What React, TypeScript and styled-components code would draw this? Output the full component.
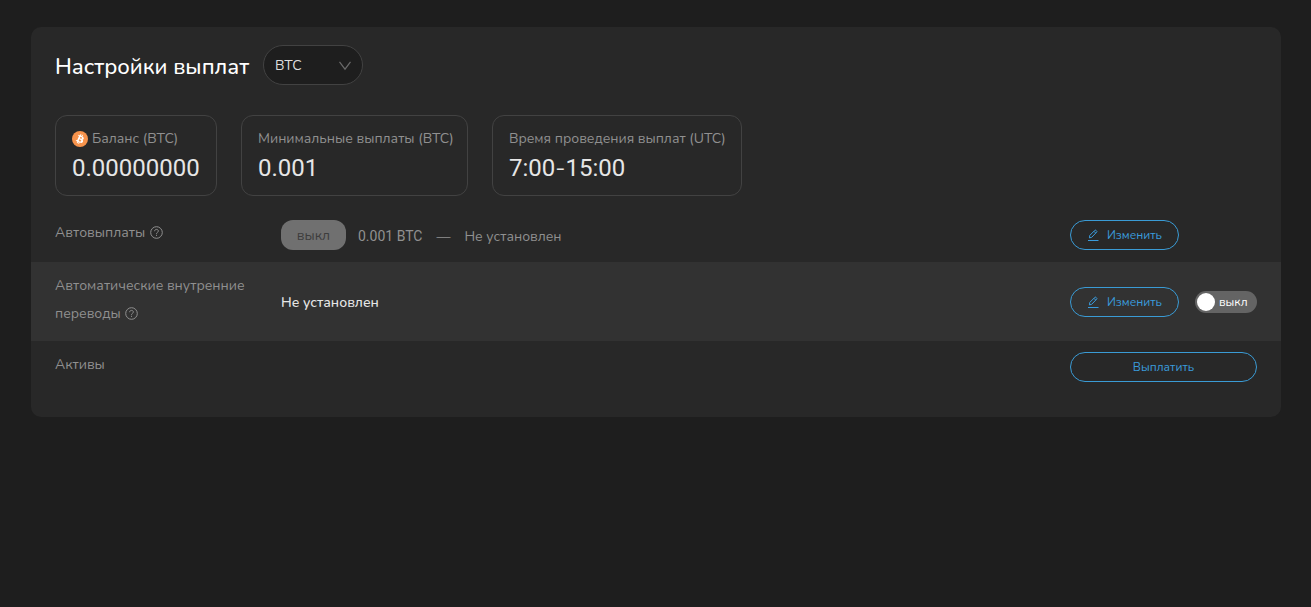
import React, { useState } from 'react';
import styled, { createGlobalStyle } from 'styled-components';

const sans = `'Nunito', 'Noto Sans', 'Open Sans', sans-serif`;
const digits = `'Roboto', 'Noto Sans', sans-serif`;

const GlobalStyle = createGlobalStyle`
  *, *::before, *::after { box-sizing: border-box; }
  body {
    margin: 0;
    background: #1e1e1e;
    color: #ffffff;
    font-family: ${sans};
    font-size: 14px;
  }
  h1, p, dl, dd { margin: 0; }
  button, select { font-family: inherit; }
`;

const Page = styled.main`
  padding: 27px 30px 24px 31px;
`;

const Panel = styled.section`
  padding: 18px 0 23px;
  border-radius: 10px;
  background: #282828;
`;

const Header = styled.header`
  display: flex;
  align-items: center;
  gap: 13px;
  height: 40px;
  padding: 0 24px;
`;

const Title = styled.h1`
  padding-top: 4px;
  font-size: 22px;
  line-height: 40px;
  font-weight: 500;
  min-width: 195px;
  white-space: nowrap;
`;

const SelectWrap = styled.label`
  display: grid;
  align-items: center;
  width: 100px;
  height: 40px;
  > * { grid-area: 1 / 1; }
  svg {
    justify-self: end;
    margin-right: 11px;
    pointer-events: none;
  }
`;

const CoinSelect = styled.select`
  appearance: none;
  width: 100%;
  height: 100%;
  padding: 0 32px 0 11px;
  border: 1px solid #424242;
  border-radius: 20px;
  background: #1e1e1e;
  color: #dedede;
  font-size: 14px;
`;

const Stats = styled.dl`
  display: flex;
  flex-wrap: wrap;
  gap: 24px;
  padding: 30px 24px 13px;
`;

const Stat = styled.div<{ $basis: number }>`
  flex: 0 0 ${p => p.$basis}px;
  min-width: 0;
  padding: 12px 16px 9px;
  border: 1px solid #424242;
  border-radius: 12px;
  white-space: nowrap;
`;

const StatName = styled.dt`
  display: flex;
  align-items: center;
  gap: 4px;
  color: #909090;
  line-height: 22px;
`;

const StatValue = styled.dd`
  color: #e6e6e6;
  font-family: ${digits};
  font-size: 24px;
  line-height: 36px;
`;

const Dash = styled.span`
  font-family: ${sans};
  line-height: 1;
`;

const Row = styled.div<{ $striped?: boolean }>`
  display: grid;
  grid-template-columns: 202px minmax(0, 1fr) 187px;
  column-gap: 24px;
  min-height: 53px;
  padding: 0 24px ${p => (p.$striped ? 0 : 1)}px;
  background: ${p => (p.$striped ? '#323232' : 'transparent')};
`;

const RowLabel = styled.div`
  padding: 10px 0 13px;
  color: #909090;
  line-height: 28px;
  svg { vertical-align: -2px; margin-left: 1px; }
`;

const RowBody = styled.div`
  display: flex;
  align-items: center;
  gap: 12px;
  color: #909090;
`;

const Threshold = styled.div`
  display: flex;
  align-items: baseline;
  gap: 14px;
  padding-top: 2px;
  line-height: 30px;
`;

const Amount = styled.span`
  font-family: ${digits};
`;

const Strong = styled.span`
  padding-top: 2px;
  color: #e6e6e6;
  font-weight: 500;
  line-height: 30px;
`;

const StatusButton = styled.button`
  width: 65px;
  height: 30px;
  padding: 0;
  border: 0;
  border-radius: 12px;
  background: #707070;
  color: #3d3d3d;
  font-size: 14px;
`;

const Actions = styled.div`
  display: flex;
  align-items: center;
  gap: 16px;
`;

const OutlineButton = styled.button<{ $wide?: boolean }>`
  display: flex;
  align-items: center;
  justify-content: center;
  gap: 8px;
  flex: 0 0 ${p => (p.$wide ? '100%' : '109px')};
  height: 30px;
  padding: 0;
  border: 1px solid #3a9bd5;
  border-radius: 15px;
  background: transparent;
  color: #3a9bdc;
  font-size: 12px;
  cursor: pointer;
`;

const Switch = styled.label`
  display: flex;
  align-items: center;
  gap: 4px;
  width: 62px;
  height: 22px;
  padding: 0 2px;
  border-radius: 11px;
  background: #646464;
  color: #ffffff;
  font-size: 12px;
  cursor: pointer;
  &:has(input:checked) {
    flex-direction: row-reverse;
    justify-content: space-between;
    background: #3a9bd5;
  }
`;

const SwitchKnob = styled.input`
  appearance: none;
  flex: none;
  width: 18px;
  height: 18px;
  margin: 0;
  border-radius: 50%;
  background: #ffffff;
`;

const BitcoinIcon = () => (
  <svg width="16" height="16" viewBox="0 0 32 32" aria-hidden="true">
    <circle cx="16" cy="16" r="16" fill="#f7934c" />
    <path
      fill="#fff"
      transform="rotate(10 16 16)"
      d="M23.2 14.02c.31-2.1-1.29-3.23-3.48-3.98l.71-2.85-1.73-.43-.69 2.77c-.46-.11-.92-.22-1.39-.33l.7-2.79-1.74-.43-.71 2.84-1.1-.26-2.4-.6-.46 1.85s1.29.3 1.26.32c.7.18.83.64.81 1.01l-.81 3.25-1.14 4.55c-.09.21-.31.53-.8.41.02.02-1.26-.32-1.26-.32l-.86 1.99 2.26.56 1.24.32-.72 2.88 1.74.43.71-2.85c.47.13.93.25 1.38.36l-.71 2.84 1.74.43.72-2.87c2.96.56 5.19.33 6.13-2.35.75-2.16-.04-3.4-1.6-4.21 1.14-.27 1.99-1.02 2.22-2.57zm-3.97 5.57c-.54 2.16-4.16.99-5.34.7l.95-3.82c1.18.29 4.94.87 4.39 3.12zm.54-5.6c-.49 1.96-3.51.97-4.48.72l.87-3.46c.98.24 4.12.7 3.61 2.74z"
    />
  </svg>
);

const ChevronIcon = () => (
  <svg width="14" height="12" viewBox="0 0 14 12" fill="none" stroke="#6a6a6a" strokeWidth="1.2" aria-hidden="true">
    <path d="M1.5 2.8 7 10.2l5.5-7.4" />
  </svg>
);

const HelpIcon = () => (
  <svg width="13" height="13" viewBox="0 0 13 13" fill="none" stroke="#909090" role="img" aria-label="Справка">
    <circle cx="6.5" cy="6.5" r="5.8" />
    <path d="M4.6 5.2c0-1 .8-1.8 1.9-1.8s1.9.7 1.9 1.7c0 1.1-1.9 1.3-1.9 2.7" />
    <path d="M6.5 8.8v1.1" />
  </svg>
);

const EditIcon = () => (
  <svg width="12" height="12" viewBox="0 0 12 12" fill="none" stroke="currentColor" aria-hidden="true">
    <path d="M1 11.5h10.5" />
    <path d="m2.4 8.9.4-2.5L7.9 1.3q.5-.5 1 0l.8.8q.5.5 0 1L4.7 8.3zM7 2.3l1.7 1.8" strokeLinejoin="round" />
  </svg>
);

const EditButton = () => (
  <OutlineButton type="button">
    <EditIcon />
    Изменить
  </OutlineButton>
);

export default function App() {
  const [internal, setInternal] = useState(false);

  return (
    <>
      <GlobalStyle />
      <Page>
        <Panel>
          <Header>
            <Title>Настройки выплат</Title>
            <SelectWrap>
              <CoinSelect aria-label="Монета" defaultValue="BTC">
                <option>BTC</option>
              </CoinSelect>
              <ChevronIcon />
            </SelectWrap>
          </Header>

          <Stats>
            <Stat $basis={162}>
              <StatName>
                <BitcoinIcon />
                Баланс (BTC)
              </StatName>
              <StatValue>0.00000000</StatValue>
            </Stat>
            <Stat $basis={227}>
              <StatName>Минимальные выплаты (BTC)</StatName>
              <StatValue>0.001</StatValue>
            </Stat>
            <Stat $basis={250}>
              <StatName>Время проведения выплат (UTC)</StatName>
              <StatValue>
                7:00<Dash>-</Dash>15:00
              </StatValue>
            </Stat>
          </Stats>

          <Row>
            <RowLabel>
              Автовыплаты <HelpIcon />
            </RowLabel>
            <RowBody>
              <StatusButton type="button">выкл</StatusButton>
              <Threshold>
                <Amount>0.001 BTC</Amount>
                <span>—</span>
                <span>Не установлен</span>
              </Threshold>
            </RowBody>
            <Actions>
              <EditButton />
            </Actions>
          </Row>

          <Row $striped>
            <RowLabel>
              Автоматические внутренние переводы <HelpIcon />
            </RowLabel>
            <RowBody>
              <Strong>Не установлен</Strong>
            </RowBody>
            <Actions>
              <EditButton />
              <Switch>
                <SwitchKnob
                  type="checkbox"
                  role="switch"
                  checked={internal}
                  onChange={e => setInternal(e.target.checked)}
                />
                {internal ? 'вкл' : 'выкл'}
              </Switch>
            </Actions>
          </Row>

          <Row>
            <RowLabel>Активы</RowLabel>
            <RowBody />
            <Actions>
              <OutlineButton type="button" $wide>
                Выплатить
              </OutlineButton>
            </Actions>
          </Row>
        </Panel>
      </Page>
    </>
  );
}
